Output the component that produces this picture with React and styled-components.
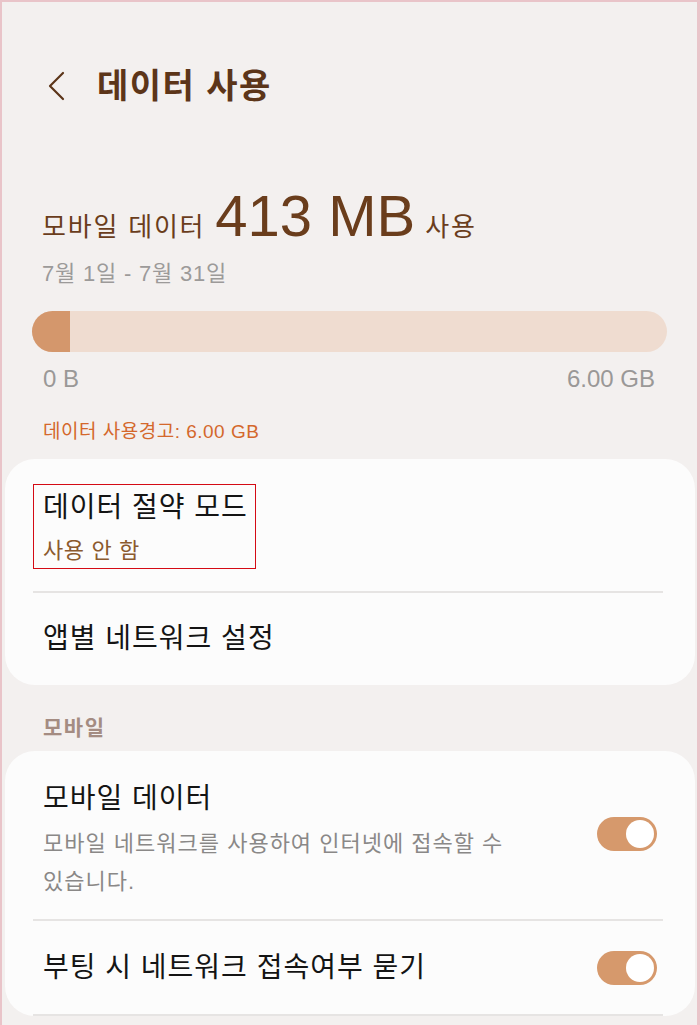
import React from "react";
import styled, { createGlobalStyle } from "styled-components";

const GlobalStyle = createGlobalStyle`
  body {
    margin: 0;
    background: #f3f0ef;
    font-family: "Liberation Sans", "Noto Sans CJK KR", sans-serif;
    word-break: keep-all;
  }
`;

const Pantalla = styled.div`
  width: 700px;
  height: 1025px;
  box-sizing: border-box;
  overflow: hidden;
  background: #f3f0ef;
  border-top: 2px solid #e9c4c9;
  border-left: 2px solid #e9c4c9;
  border-right: 3px solid #e9c4c9;
`;

const Cabecera = styled.header`
  display: flex;
  align-items: center;
  gap: 32px;
  height: 56px;
  margin-top: 56px;
  padding-left: 45px;
`;

const Titulo = styled.h1`
  margin: 0;
  font-size: 34px;
  font-weight: 700;
  letter-spacing: 1.5px;
  color: #5c3519;
  line-height: 56px;
`;

const Resumen = styled.section`
  padding: 0 40px;
`;

const Uso = styled.div`
  display: flex;
  align-items: baseline;
  gap: 10px;
  margin-top: 73px;
  color: #6a3d1c;
  line-height: 1;
`;

const UsoEtiqueta = styled.span`
  font-size: 26px;
  letter-spacing: 1.8px;
`;

const UsoValor = styled.span`
  font-size: 58px;
`;

const Fecha = styled.div`
  margin-top: 15px;
  font-size: 22px;
  letter-spacing: 0.8px;
  line-height: 28px;
  color: #9c9a99;
`;

const Barra = styled.div`
  display: flex;
  height: 41px;
  margin: 23px 30px 0;
  border-radius: 21px;
  overflow: hidden;
  background: #efdcd0;
`;

const Relleno = styled.div`
  background: #d4976c;
`;

const Escala = styled.div`
  display: flex;
  justify-content: space-between;
  margin-top: 13px;
  padding: 0 42px 0 41px;
  font-size: 24px;
  line-height: 28px;
  color: #9a9897;
`;

const Aviso = styled.div`
  margin-top: 27px;
  padding-left: 41px;
  font-size: 19px;
  letter-spacing: 0.5px;
  line-height: 24px;
  color: #d4682c;
`;

const Tarjeta = styled.div`
  margin: ${(p) => p.$top}px 2px 0 3px;
  background: #fcfcfc;
  border-radius: 30px;
`;

const Fila = styled.div`
  display: flex;
  align-items: center;
  justify-content: space-between;
  min-height: ${(p) => p.$alto || 0}px;
  padding: ${(p) => p.$pad || "0 38px"};
  box-sizing: border-box;
`;

const Marcado = styled.div`
  width: 223px;
  box-sizing: border-box;
  margin-left: -10px;
  padding: 5px 0 2px 9px;
  border: 1px solid #d40a14;
`;

const Texto = styled.div`
  font-size: 28px;
  letter-spacing: 1px;
  line-height: 36px;
  color: #141414;
`;

const Estado = styled.div`
  margin-top: 10px;
  font-size: 22px;
  letter-spacing: 0.6px;
  line-height: 30px;
  color: #8b5a2e;
`;

const Descripcion = styled.div`
  width: 480px;
  margin-top: 8px;
  font-size: 22px;
  letter-spacing: 1px;
  line-height: 38px;
  color: #8a8887;
`;

const Separador = styled.div`
  height: 2px;
  margin: 0 32px 0 28px;
  background: #e6e4e3;
`;

const Seccion = styled.div`
  margin-top: 29px;
  padding-left: 41px;
  font-size: 21px;
  font-weight: 700;
  letter-spacing: 1.5px;
  line-height: 28px;
  color: #a48c82;
`;

const Interruptor = styled.span`
  flex: none;
  display: flex;
  justify-content: flex-end;
  align-items: center;
  width: 60px;
  height: 34px;
  padding: 3px;
  box-sizing: border-box;
  margin-bottom: ${(p) => p.$abajo || 0}px;
  border-radius: 17px;
  background: #d6996c;
  &::after {
    content: "";
    width: 28px;
    height: 28px;
    border-radius: 50%;
    background: #fff;
  }
`;

const Atras = () => (
  <svg width="18" height="30" viewBox="0 0 18 30">
    <polyline
      points="16,2 3,15 16,28"
      fill="none"
      stroke="#5c3519"
      strokeWidth="2.2"
      strokeLinecap="round"
      strokeLinejoin="round"
    />
  </svg>
);

const usado = 413;
const limite = 6000;

const App = () => {
  return (
    <>
      <GlobalStyle />
      <Pantalla>
        <Cabecera>
          <Atras />
          <Titulo>데이터 사용</Titulo>
        </Cabecera>
        <Resumen>
          <Uso>
            <UsoEtiqueta>모바일 데이터</UsoEtiqueta>
            <UsoValor>413 MB</UsoValor>
            <UsoEtiqueta>사용</UsoEtiqueta>
          </Uso>
          <Fecha>7월 1일 - 7월 31일</Fecha>
        </Resumen>
        <Barra>
          <Relleno style={{ width: `${(usado / limite) * 100 - 0.9}%` }} />
        </Barra>
        <Escala>
          <span>0 B</span>
          <span>6.00 GB</span>
        </Escala>
        <Aviso>데이터 사용경고: 6.00 GB</Aviso>

        <Tarjeta $top={15}>
          <Fila $pad="25px 38px 22px">
            <Marcado>
              <Texto>데이터 절약 모드</Texto>
              <Estado>사용 안 함</Estado>
            </Marcado>
          </Fila>
          <Separador />
          <Fila $alto={92}>
            <Texto>앱별 네트워크 설정</Texto>
          </Fila>
        </Tarjeta>

        <Seccion>모바일</Seccion>

        <Tarjeta $top={9}>
          <Fila $pad="30px 38px 18px">
            <div>
              <Texto>모바일 데이터</Texto>
              <Descripcion>
                모바일 네트워크를 사용하여 인터넷에 접속할 수 있습니다.
              </Descripcion>
            </div>
            <Interruptor $abajo={14} />
          </Fila>
          <Separador />
          <Fila $alto={93}>
            <Texto>부팅 시 네트워크 접속여부 묻기</Texto>
            <Interruptor />
          </Fila>
          <Separador />
        </Tarjeta>
      </Pantalla>
    </>
  );
};

export default App;
